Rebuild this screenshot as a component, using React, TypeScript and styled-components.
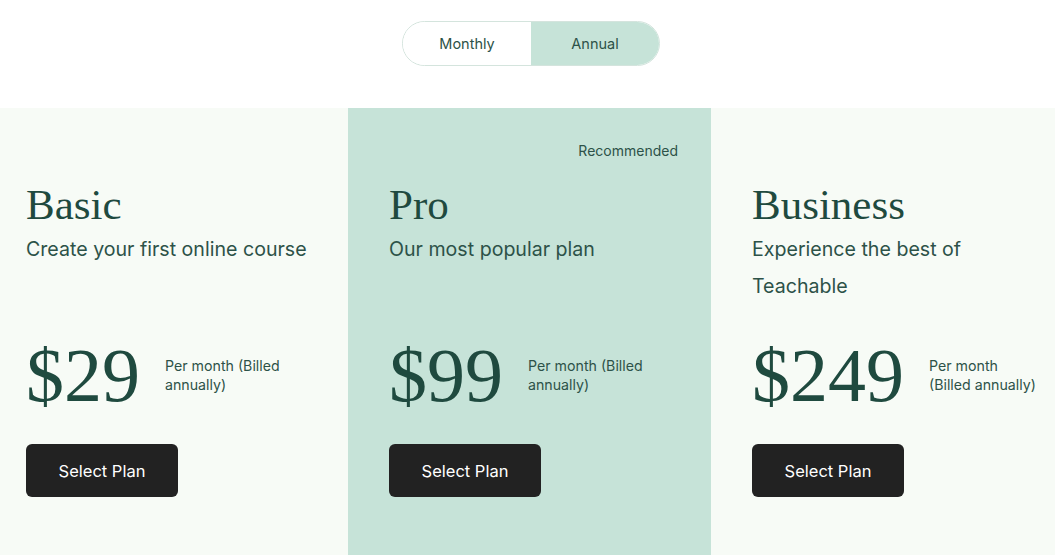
import React, { useState } from "react";
import styled, { createGlobalStyle } from "styled-components";

const Global = createGlobalStyle`
  html, body { margin: 0; padding: 0; background: #ffffff; }
  body { overflow: hidden; font-family: "Inter", "Liberation Sans", sans-serif; }
`;

const Page = styled.div`
  width: 1055px;
  height: 555px;
  overflow: hidden;
  display: flex;
  flex-direction: column;
`;

const ToggleBar = styled.div`
  display: flex;
  justify-content: center;
  padding: 21px 0 0 7px;
  height: 108px;
  flex-shrink: 0;
  box-sizing: border-box;
`;

const Toggle = styled.div`
  display: flex;
  width: 258px;
  height: 45px;
  border: 1px solid #d4e4dd;
  border-radius: 23px;
  overflow: hidden;
  box-sizing: border-box;
`;

const ToggleOption = styled.button<{ $active: boolean }>`
  flex: 1;
  border: none;
  margin: 0;
  padding: 0;
  background: ${(p) => (p.$active ? "#c6e3d8" : "#ffffff")};
  color: #2d5248;
  font-family: "Inter", "Liberation Sans", sans-serif;
  font-size: 14.5px;
  cursor: pointer;
`;

const Cards = styled.div`
  display: grid;
  grid-template-columns: 363px 363px 363px;
  margin-left: -15px;
  flex: 1;
`;

const Card = styled.div<{ $featured: boolean }>`
  background: ${(p) => (p.$featured ? "#c6e3d8" : "#f7fbf6")};
  padding: 30px 33px 0 41px;
  display: flex;
  flex-direction: column;
  align-items: flex-start;
`;

const Badge = styled.div`
  align-self: stretch;
  height: 26px;
  line-height: 26px;
  text-align: right;
  font-size: 14px;
  color: #2d5248;
`;

const Title = styled.h2`
  margin: 16px 0 0;
  font-family: "Liberation Serif", serif;
  font-weight: 400;
  font-size: 43px;
  line-height: 49px;
  color: #1f4a3f;
`;

const Subtitle = styled.p`
  margin: 2px 0 0;
  min-height: 74px;
  font-size: 19.6px;
  line-height: 37px;
  color: #2d5248;
`;

const PriceRow = styled.div`
  margin-top: 32px;
  display: flex;
  align-items: center;
  gap: 25px;
  align-self: stretch;
`;

const Price = styled.div`
  font-family: "Liberation Serif", serif;
  font-size: 76px;
  line-height: 76px;
  color: #1f4a3f;
  white-space: nowrap;
`;

const PriceNote = styled.div`
  flex: 1;
  font-size: 14.2px;
  line-height: 19px;
  color: #2d5248;
`;

const SelectButton = styled.button`
  margin-top: 31px;
  width: 152px;
  height: 53px;
  border: none;
  border-radius: 6px;
  background: #222222;
  color: #ffffff;
  font-family: "Inter", "Liberation Sans", sans-serif;
  font-size: 16.5px;
  cursor: pointer;
`;

const plans = [
  { name: "Basic", desc: "Create your first online course", price: "$29", featured: false },
  { name: "Pro", desc: "Our most popular plan", price: "$99", featured: true },
  { name: "Business", desc: "Experience the best of Teachable", price: "$249", featured: false },
];

export default function App() {
  const [period, setPeriod] = useState<"monthly" | "annual">("annual");
  return (
    <Page>
      <Global />
      <ToggleBar>
        <Toggle>
          <ToggleOption $active={period === "monthly"} onClick={() => setPeriod("monthly")}>
            Monthly
          </ToggleOption>
          <ToggleOption $active={period === "annual"} onClick={() => setPeriod("annual")}>
            Annual
          </ToggleOption>
        </Toggle>
      </ToggleBar>
      <Cards>
        {plans.map((p) => (
          <Card key={p.name} $featured={p.featured}>
            <Badge>{p.featured ? "Recommended" : ""}</Badge>
            <Title>{p.name}</Title>
            <Subtitle>{p.desc}</Subtitle>
            <PriceRow>
              <Price>{p.price}</Price>
              <PriceNote>Per month (Billed annually)</PriceNote>
            </PriceRow>
            <SelectButton>Select Plan</SelectButton>
          </Card>
        ))}
      </Cards>
    </Page>
  );
}
